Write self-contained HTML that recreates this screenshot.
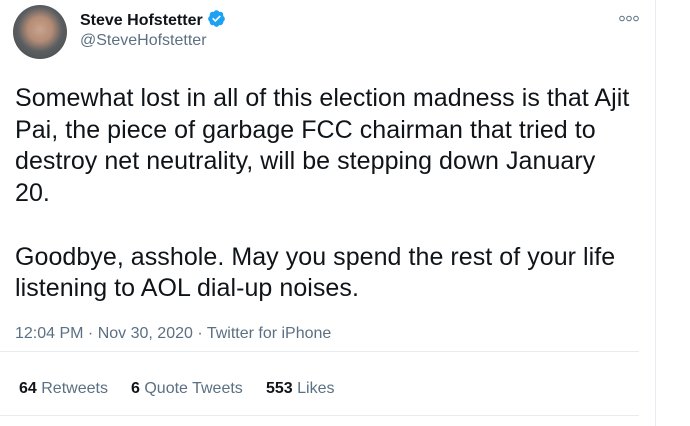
<!DOCTYPE html>
<html><head><meta charset="utf-8"><style>
*{margin:0;padding:0;box-sizing:border-box}
body{width:690px;height:426px;background:#fff;font-family:"Liberation Sans",sans-serif;color:#0f1419;position:relative;overflow:hidden}
.abs{position:absolute;white-space:nowrap}
.av{left:13px;top:5px;width:54px;height:54px;border-radius:50%;background:radial-gradient(circle at 50% 45%,#c9a48e 0,#b58c76 30%,#5b5f62 55%,#3e4345 100%)}
.name{left:80px;top:9px;font-weight:bold;font-size:16px}
.handle{left:80px;top:32px;font-size:16px;color:#5b7083}
.txt{left:15px;top:83px;font-size:25px;line-height:31.7px;color:#0f1419;letter-spacing:0.05px}
.meta{left:15px;top:325px;font-size:16px;color:#5b7083}
.stats{left:18px;top:380px;font-size:16px;color:#5b7083}
.stats b{color:#0f1419}
.hl{position:absolute;left:0;width:639px;height:1px;background:#e6ecf0}
.vl{position:absolute;left:655px;top:0;width:1px;height:426px;background:#e6ecf0}
</style></head><body>
<div class="abs av"></div>
<div class="abs name">Steve Hofstetter <svg width="19" height="19" viewBox="0 0 24 24" style="vertical-align:-3px"><path fill="#1da1f2" d="M22.5 12.5c0-1.58-.875-2.95-2.148-3.6.154-.435.238-.905.238-1.4 0-2.21-1.71-3.998-3.818-3.998-.47 0-.92.084-1.336.25C14.818 2.415 13.51 1.5 12 1.5s-2.816.917-3.437 2.25c-.415-.165-.866-.25-1.336-.25-2.11 0-3.818 1.790-3.818 4 0 .494.083.964.237 1.4-1.272.65-2.147 2.018-2.147 3.6 0 1.495.782 2.798 1.942 3.486-.02.17-.032.34-.032.514 0 2.21 1.708 4 3.818 4 .47 0 .92-.086 1.335-.25.62 1.334 1.926 2.250 3.437 2.25 1.512 0 2.818-.916 3.437-2.25.415.163.865.248 1.336.248 2.11 0 3.818-1.79 3.818-4 0-.174-.012-.344-.033-.513 1.158-.687 1.943-1.99 1.943-3.484z"/><path fill="#fff" d="M10.5 16.5l-4-4 1.5-1.5 2.5 2.5 5.5-5.5 1.5 1.5z"/></svg></div>
<div class="abs handle">@SteveHofstetter</div>
<svg class="abs" style="left:619px;top:15px" width="20" height="7" viewBox="0 0 20 7"><g fill="none" stroke="#5b7083" stroke-width="1"><circle cx="3" cy="3.5" r="2.3"/><circle cx="10" cy="3.5" r="2.3"/><circle cx="17" cy="3.5" r="2.3"/></g></svg>
<div class="abs txt">Somewhat lost in all of this election madness is that Ajit<br>Pai, the piece of garbage FCC chairman that tried to<br>destroy net neutrality, will be stepping down January<br>20.<br><br>Goodbye, asshole. May you spend the rest of your life<br>listening to AOL dial-up noises.</div>
<div class="abs meta">12:04 PM · Nov 30, 2020 · Twitter for iPhone</div>
<div class="hl" style="top:351px"></div>
<div class="abs stats" style="left:19px"><b>64</b> Retweets</div>
<div class="abs stats" style="left:131px"><b>6</b> Quote Tweets</div>
<div class="abs stats" style="left:266px"><b>553</b> Likes</div>
<div class="hl" style="top:415px"></div>
<div class="vl"></div>
</body></html>
